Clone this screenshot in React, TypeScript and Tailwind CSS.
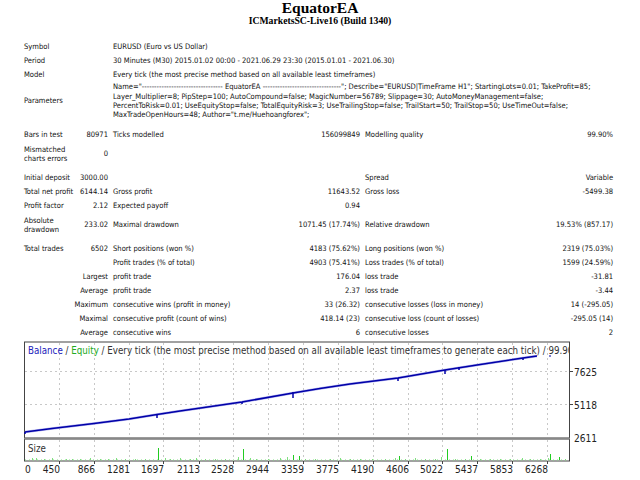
type Cells = { a?: string; b?: string; ab?: string; c?: string; d?: string; e?: string; f?: string };

function TR({ a, b, ab, c, d, e, f }: Cells) {
  return (
    <tr className="h-[14px]">
      {ab ? (
        <td colSpan={2} className="p-0 text-right">{ab}</td>
      ) : (
        <>
          <td className="p-0 text-left">{a}</td>
          <td className="p-0 text-right">{b}</td>
        </>
      )}
      <td className="p-0 pl-[5px] text-left">{c}</td>
      <td className="p-0 text-right">{d}</td>
      <td className="p-0 pl-[5px] text-left">{e}</td>
      <td className="p-0 text-right">{f}</td>
    </tr>
  );
}

function Spacer({ h }: { h: string }) {
  return (
    <tr className={h}>
      <td colSpan={6} className="p-0" />
    </tr>
  );
}

const vx = [59, 94, 129, 163, 199, 233, 268, 303, 338, 373, 408, 442, 477, 512, 547];
const xLabels = ["450", "866", "1281", "1697", "2113", "2528", "2944", "3359", "3775", "4190", "4606", "5022", "5437", "5853", "6268"];
const line = "25,432 52,428.5 94,423.5 129,419 157,414.5 180,411 242,402 293,393 320,388.5 350,384 398,378 445,370 477,365 523,358 537,356";
const dips = [[25, 432, 434], [157, 414, 418], [242, 402, 404], [293, 392, 398], [398, 378, 381], [445, 370, 374], [459, 367, 370], [523, 358, 360]];
const tall: [number, number][] = [[158, 12], [243, 11], [447, 11], [299, 4], [293, 5], [399, 4], [471, 4], [550, 6], [559, 3]];
const small: [number, number][] = [[287, 3], [522, 2], [340, 2], [90, 2], [116, 2], [196, 2], [415, 2], [32, 2], [36, 2], [44, 1], [52, 2], [66, 1], [72, 1], [80, 1], [100, 1], [108, 1], [125, 1], [135, 1], [145, 1], [165, 2], [170, 1], [180, 2], [190, 1], [205, 1], [215, 1], [225, 1], [238, 3], [250, 2], [256, 1], [268, 1], [280, 2], [305, 1], [315, 1], [330, 1], [350, 1], [360, 1], [372, 1], [385, 1], [395, 2], [405, 1], [425, 1], [435, 1], [441, 3], [455, 1], [465, 1], [480, 1], [490, 1], [500, 1], [510, 1], [530, 1], [540, 1], [548, 2], [565, 1]];

export default function App() {
  return (
    <div className="w-[640px] h-[480px] overflow-hidden bg-white text-[#111111] font-['DejaVu_Sans',sans-serif] font-stretch-condensed">
      <div className="text-center font-['Liberation_Serif',serif] font-bold text-black font-stretch-normal">
        <div className="text-[15.5px] leading-[16px]">EquatorEA</div>
        <div className="text-[9.7px] leading-[10px]">ICMarketsSC-Live16 (Build 1340)</div>
      </div>
      <table className="ml-[24px] mt-[14px] w-[589px] table-fixed border-collapse whitespace-nowrap text-[7.55px] leading-[9.33px]">
        <colgroup>
          <col className="w-[54px]" />
          <col className="w-[30px]" />
          <col className="w-[130px]" />
          <col className="w-[122px]" />
          <col className="w-[130px]" />
          <col className="w-[123px]" />
        </colgroup>
        <tbody>
          <tr className="h-[14px]"><td className="p-0" colSpan={2}>Symbol</td><td className="p-0 pl-[5px]" colSpan={4}>EURUSD (Euro vs US Dollar)</td></tr>
          <tr className="h-[14px]"><td className="p-0" colSpan={2}>Period</td><td className="p-0 pl-[5px]" colSpan={4}>30 Minutes (M30) 2015.01.02 00:00 - 2021.06.29 23:30 (2015.01.01 - 2021.06.30)</td></tr>
          <tr className="h-[14px]"><td className="p-0" colSpan={2}>Model</td><td className="p-0 pl-[5px]" colSpan={4}>Every tick (the most precise method based on all available least timeframes)</td></tr>
          <tr className="h-[38px]">
            <td className="p-0" colSpan={2}>Parameters</td>
            <td className="p-0 pl-[5px]" colSpan={4}>
              <div>Name="--------------------------------- EquatorEA --------------------------------"; Describe="EURUSD|TimeFrame H1"; StartingLots=0.01; TakeProfit=85;</div>
              <div>Layer_Multiplier=8; PipStep=100; AutoCompound=false; MagicNumber=56789; Slippage=30; AutoMoneyManagement=false;</div>
              <div>PercentToRisk=0.01; UseEquityStop=false; TotalEquityRisk=3; UseTrailingStop=false; TrailStart=50; TrailStop=50; UseTimeOut=false;</div>
              <div>MaxTradeOpenHours=48; Author="t.me/Huehoangforex";</div>
            </td>
          </tr>
          <Spacer h="h-[8px]" />
          <TR a="Bars in test" b="80971" c="Ticks modelled" d="156099849" e="Modelling quality" f="99.90%" />
          <tr className="h-[24px]">
            <td className="p-0">Mismatched<br />charts errors</td>
            <td className="p-0 text-right">0</td>
            <td className="p-0" colSpan={4} />
          </tr>
          <Spacer h="h-[5px]" />
          <TR a="Initial deposit" b="3000.00" e="Spread" f="Variable" />
          <TR a="Total net profit" b="6144.14" c="Gross profit" d="11643.52" e="Gross loss" f="-5499.38" />
          <TR a="Profit factor" b="2.12" c="Expected payoff" d="0.94" />
          <tr className="h-[24px]">
            <td className="p-0">Absolute<br />drawdown</td>
            <td className="p-0 text-right">233.02</td>
            <td className="p-0 pl-[5px]">Maximal drawdown</td>
            <td className="p-0 text-right">1071.45 (17.74%)</td>
            <td className="p-0 pl-[5px]">Relative drawdown</td>
            <td className="p-0 text-right">19.53% (857.17)</td>
          </tr>
          <Spacer h="h-[5px]" />
          <TR a="Total trades" b="6502" c="Short positions (won %)" d="4183 (75.62%)" e="Long positions (won %)" f="2319 (75.03%)" />
          <TR c="Profit trades (% of total)" d="4903 (75.41%)" e="Loss trades (% of total)" f="1599 (24.59%)" />
          <TR ab="Largest" c="profit trade" d="176.04" e="loss trade" f="-31.81" />
          <TR ab="Average" c="profit trade" d="2.37" e="loss trade" f="-3.44" />
          <TR ab="Maximum" c="consecutive wins (profit in money)" d="33 (26.32)" e="consecutive losses (loss in money)" f="14 (-295.05)" />
          <TR ab="Maximal" c="consecutive profit (count of wins)" d="418.14 (23)" e="consecutive loss (count of losses)" f="-295.05 (14)" />
          <TR ab="Average" c="consecutive wins" d="6" e="consecutive losses" f="2" />
        </tbody>
      </table>
      <svg className="block" width="640" height="140" viewBox="0 340 640 140">
        <rect x="24.5" y="342" width="545" height="96" fill="#fff" stroke="#444" strokeWidth="1" />
        <rect x="24.5" y="439" width="545" height="22" fill="#fff" stroke="#444" strokeWidth="1" />
        <line x1="24" y1="438.5" x2="570" y2="438.5" stroke="#888" strokeWidth="1.5" />
        {vx.map((x) => (
          <g key={x}>
            <line x1={x + 0.5} y1="343" x2={x + 0.5} y2="438" stroke="#c8c8c8" strokeDasharray="2 3" />
            <line x1={x + 0.5} y1="440" x2={x + 0.5} y2="461" stroke="#c8c8c8" strokeDasharray="2 3" />
            <line x1={x + 0.5} y1="461" x2={x + 0.5} y2="464" stroke="#444" />
          </g>
        ))}
        {[371, 404].map((y) => (
          <g key={y}>
            <line x1="25" y1={y + 0.5} x2="569" y2={y + 0.5} stroke="#c8c8c8" strokeDasharray="2 3" />
            <line x1="570" y1={y + 0.5} x2="573" y2={y + 0.5} stroke="#444" />
          </g>
        ))}
        <line x1="25" y1="460" x2="569" y2="460" stroke="#7fe07f" strokeWidth="1" strokeDasharray="1 3" />
        <polyline points={line} fill="none" stroke="#b4b4ee" strokeWidth="2.6" />
        <polyline points={line} fill="none" stroke="#0000a8" strokeWidth="1.5" />
        {dips.map(([x, a, b]) => (
          <line key={x} x1={x} y1={a} x2={x} y2={b} stroke="#0000a8" strokeWidth="1.5" />
        ))}
        <line x1="549" y1="356" x2="551" y2="356" stroke="#0000a8" strokeWidth="1" />
        {small.map(([x, h]) => (
          <line key={x} x1={x + 0.5} y1={460} x2={x + 0.5} y2={460 - h} stroke="#7fe07f" strokeWidth="1" />
        ))}
        {tall.map(([x, h]) => (
          <line key={x} x1={x + 0.5} y1={460} x2={x + 0.5} y2={460 - h} stroke="#22cc22" strokeWidth="1" />
        ))}
        <svg x="25" y="343" width="544" height="18" viewBox="25 343 544 18">
          <text x="28" y="354" fontSize="9.7">
            <tspan fill="#2222bb">Balance</tspan>
            <tspan fill="#333"> / </tspan>
            <tspan fill="#22aa22">Equity</tspan>
            <tspan fill="#333"> / Every tick (the most precise method based on all available least timeframes to generate each tick) / 99.90%</tspan>
          </text>
        </svg>
        <text x="28" y="452" fontSize="9.7" fill="#333">Size</text>
        <g fontSize="10.1" fill="#222">
          <text x="574" y="376">7625</text>
          <text x="574" y="409">5118</text>
          <text x="574" y="442">2611</text>
          <text x="25" y="473">0</text>
          {xLabels.map((t, i) => (
            <text key={t} x={vx[i] + 1} y="473" textAnchor="end">{t}</text>
          ))}
        </g>
      </svg>
    </div>
  );
}
